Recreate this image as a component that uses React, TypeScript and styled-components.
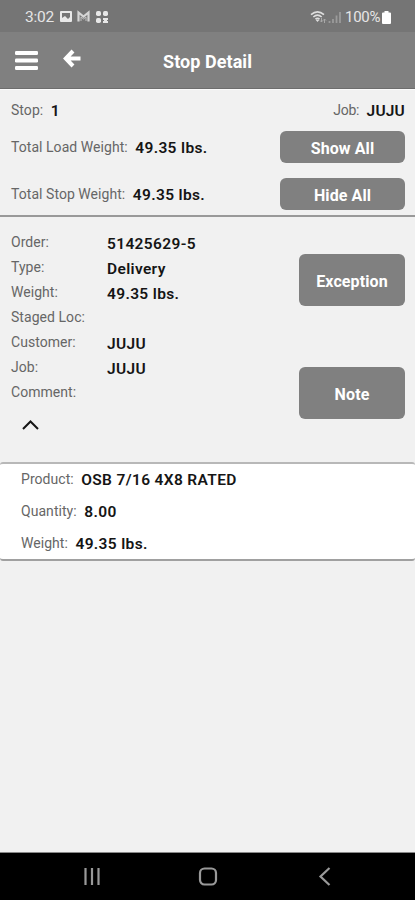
import React from "react";
import styled, { createGlobalStyle } from "styled-components";

const GlobalStyle = createGlobalStyle`
  * { box-sizing: border-box; }
  body { margin: 0; background: #f1f1f1; font-family: Roboto, sans-serif; }
`;

const Screen = styled.div`
  height: 900px;
  display: flex;
  flex-direction: column;
  overflow: hidden;
  background: #f1f1f1;
`;

const StatusBar = styled.div`
  height: 32px;
  flex: none;
  background: #757575;
  color: #e6e6e6;
  display: flex;
  align-items: center;
  justify-content: space-between;
  padding: 2px 24px 0 25px;
  font-size: 15.5px;
`;

const StatusGroup = styled.div`
  display: flex;
  align-items: center;
  svg { display: block; }
`;

const Clock = styled.span`
  width: 35px;
  letter-spacing: -0.2px;
  white-space: nowrap;
`;

const BatteryLevel = styled.span`
  width: 37px;
  margin-left: 3px;
  font-size: 15px;
  letter-spacing: -0.3px;
  white-space: nowrap;
`;

const Header = styled.header`
  height: 57px;
  flex: none;
  display: grid;
  grid-template-columns: 44px 1fr 44px;
  background: #808080;
  border-bottom: 1px solid #6d6d6d;
  color: #fff;
`;

const MenuIcon = styled.svg`
  display: block;
  margin: 18px 0 0 14px;
`;

const HeaderMain = styled.div`
  display: grid;
  grid-template-columns: 60px 1fr 60px;
`;

const BackIcon = styled.svg`
  display: block;
  margin: 17px 0 0 18px;
`;

const Title = styled.h1`
  margin: 3px 0 0;
  font-size: 18px;
  line-height: 54px;
  font-weight: 700;
  letter-spacing: 0.05px;
  text-align: center;
  white-space: nowrap;
`;

const Summary = styled.section`
  height: 128px;
  flex: none;
  display: grid;
  grid-template-rows: 33px 47px 45px;
  padding: 0 10px 0 11px;
  border-top: 1px solid #fafafa;
  border-bottom: 2px solid #999;
`;

const SummaryRow = styled.div<{ $top: number }>`
  display: flex;
  justify-content: space-between;
  align-items: flex-start;
  padding-top: ${(p) => p.$top}px;
`;

const Field = styled.div<{ $top?: number }>`
  display: flex;
  gap: 7.5px;
  height: 20px;
  margin-top: ${(p) => p.$top ?? 0}px;
  line-height: 20px;
  white-space: nowrap;
`;

const Label = styled.span<{ $spacing?: number }>`
  font-size: 14px;
  line-height: 19px;
  color: #666;
  letter-spacing: ${(p) => p.$spacing ?? 0.05}px;
  white-space: nowrap;
`;

const Value = styled.span<{ $spacing?: number }>`
  font-size: 15.5px;
  line-height: 21px;
  font-weight: 600;
  color: #151515;
  letter-spacing: ${(p) => p.$spacing ?? 0.35}px;
  white-space: nowrap;
`;

const Button = styled.button<{ $w: number; $h: number }>`
  width: ${(p) => p.$w}px;
  height: ${(p) => p.$h}px;
  padding: 2px 0 0;
  border: 0;
  border-radius: 6px;
  background: #808080;
  color: #fff;
  font-family: inherit;
  font-size: 16px;
  font-weight: 700;
  letter-spacing: 0.1px;
`;

const Order = styled.section`
  height: 246px;
  flex: none;
  display: grid;
  grid-template-columns: 1fr 106px;
  padding: 0 10px 0 11px;
`;

const OrderFields = styled.div`
  padding-top: 16px;
`;

const OrderRow = styled.div`
  height: 25px;
  display: grid;
  grid-template-columns: 96px 1fr;
`;

const OrderValue = styled(Value)`
  line-height: 23px;
`;

const Chevron = styled.svg`
  display: block;
  margin: 10px 0 0 10px;
`;

const Actions = styled.div`
  display: flex;
  flex-direction: column;
  gap: 61px;
  padding-top: 37px;
`;

const Product = styled.section`
  height: 99px;
  flex: none;
  display: flex;
  flex-direction: column;
  gap: 12px;
  padding: 6px 21px 0;
  margin-top: -1px;
  background: #fff;
  border-top: 2px solid #b8b8b8;
  border-bottom: 2px solid #a0a0a0;
  border-radius: 3px;
`;

const Blank = styled.div`
  flex: 1;
  border-bottom: 1px solid #888;
`;

const NavBar = styled.nav`
  height: 47px;
  flex: none;
  display: grid;
  grid-template-columns: 150px 116px 149px;
  background: #000;
`;

const NavIcon = styled.svg<{ $left: number }>`
  display: block;
  margin: 12px 0 0 ${(p) => p.$left}px;
`;

const orderFields: [string, string][] = [
  ["Order:", "51425629-5"],
  ["Type:", "Delivery"],
  ["Weight:", "49.35 lbs."],
  ["Staged Loc:", ""],
  ["Customer:", "JUJU"],
  ["Job:", "JUJU"],
  ["Comment:", ""],
];

const NotificationIcons = () => (
  <svg width="50" height="14" viewBox="0 0 50 14" fill="#e8e8e8">
    <path fillRule="evenodd" d="M1 1h10q1 0 1 1v9q0 1-1 1H1q-1 0-1-1V2q0-1 1-1Zm1 2v5l3-2 3 3 2-2V3Z" />
    <path d="M18.500 11.500V2.500l5 4 5-4v9" fill="none" stroke="#d5d5d5" strokeWidth="2.200" />
    <path d="M21 11V7l2.500 2L26 7v4" fill="none" stroke="#c2c2c2" strokeWidth="1" />
    <rect x="36" y="1" width="5" height="5" rx="1.700" />
    <rect x="43" y="1" width="5" height="5" rx="1.700" />
    <rect x="36" y="8" width="5" height="5" rx="1.700" />
    <path d="M43 8h5v2h-1v1h1v2h-5v-2h1v-1h-1Z" />
  </svg>
);

const SignalIcons = () => (
  <svg width="32" height="15" viewBox="0 0 32 15" fill="none">
    <path d="M1 4.700Q7.500-.8 14 4.700M3.300 7Q7.500 3.300 11.700 7M5.500 9.200Q7.500 7.400 9.500 9.200" stroke="#dedede" strokeWidth="1.600" />
    <path d="m7.500 12-2-2.300h4Z" fill="#dedede" />
    <path d="M11.500 8v4m-1.500-1.500 1.500 1.500 1-1.500M14.500 13V9m-1.200 1.500L14.500 9l1.500 1.500" stroke="#a9a9a9" />
    <path d="M19.500 11v2M23 9v4M26.500 5.500V13M30 2v11" stroke="#9b9b9b" strokeWidth="1.800" />
  </svg>
);

export default function App() {
  return (
    <>
      <GlobalStyle />
      <Screen>
        <StatusBar>
          <StatusGroup>
            <Clock>3:02</Clock>
            <NotificationIcons />
          </StatusGroup>
          <StatusGroup>
            <SignalIcons />
            <BatteryLevel>100%</BatteryLevel>
            <svg width="9" height="13" viewBox="0 0 9 13" fill="#fff">
              <path d="M2.500 0h4v1.500H8q1 0 1 1V12q0 1-1 1H1q-1 0-1-1V2.500q0-1 1-1h1.500Z" />
            </svg>
          </StatusGroup>
        </StatusBar>

        <Header>
          <MenuIcon width="24" height="21" viewBox="0 0 24 21" fill="#fff">
            <rect x="1" y="1" width="23" height="4" rx="1.300" />
            <rect x="1" y="8.500" width="23" height="4" rx="1.300" />
            <rect x="1" y="16" width="23" height="4" rx="1.300" />
          </MenuIcon>
          <HeaderMain>
            <BackIcon width="20" height="20" viewBox="0 0 20 20" fill="none" stroke="#fff" strokeWidth="4">
              <path d="M11 2 3.800 9.500 11 17M4 9.500h14.500" />
            </BackIcon>
            <Title>Stop Detail</Title>
          </HeaderMain>
        </Header>

        <Summary>
          <SummaryRow $top={11}>
            <Field><Label>Stop:</Label><Value>1</Value></Field>
            <Field><Label $spacing={-0.3}>Job:</Label><Value $spacing={0.2}>JUJU</Value></Field>
          </SummaryRow>
          <SummaryRow $top={8}>
            <Field $top={7}><Label>Total Load Weight:</Label><Value>49.35 lbs.</Value></Field>
            <Button $w={125} $h={32}>Show All</Button>
          </SummaryRow>
          <SummaryRow $top={8}>
            <Field $top={7}><Label>Total Stop Weight:</Label><Value>49.35 lbs.</Value></Field>
            <Button $w={125} $h={32}>Hide All</Button>
          </SummaryRow>
        </Summary>

        <Order>
          <OrderFields>
            {orderFields.map(([label, value]) => (
              <OrderRow key={label}>
                <Label>{label}</Label>
                <OrderValue>{value}</OrderValue>
              </OrderRow>
            ))}
            <Chevron width="20" height="14" viewBox="0 0 20 14" fill="none" stroke="#151515" strokeWidth="2">
              <path d="m2 11 7.500-7.500L17 11" />
            </Chevron>
          </OrderFields>
          <Actions>
            <Button $w={106} $h={52}>Exception</Button>
            <Button $w={106} $h={52}>Note</Button>
          </Actions>
        </Order>

        <Product>
          <Field><Label>Product:</Label><Value>OSB 7/16 4X8 RATED</Value></Field>
          <Field><Label>Quantity:</Label><Value>8.00</Value></Field>
          <Field><Label>Weight:</Label><Value>49.35 lbs.</Value></Field>
        </Product>

        <Blank />

        <NavBar>
          <NavIcon $left={82} width="20" height="22" viewBox="0 0 20 22" stroke="#999" strokeWidth="2.200">
            <path d="M3.500 3v17M10 3v17M16.500 3v17" />
          </NavIcon>
          <NavIcon $left={48} width="20" height="22" viewBox="0 0 20 22" fill="none" stroke="#999" strokeWidth="2.200">
            <rect x="2" y="3.500" width="16" height="16" rx="4.500" />
          </NavIcon>
          <NavIcon $left={51} width="16" height="22" viewBox="0 0 16 22" fill="none" stroke="#999" strokeWidth="2.200">
            <path d="m12.500 3-9 8.500 9 8.500" />
          </NavIcon>
        </NavBar>
      </Screen>
    </>
  );
}
